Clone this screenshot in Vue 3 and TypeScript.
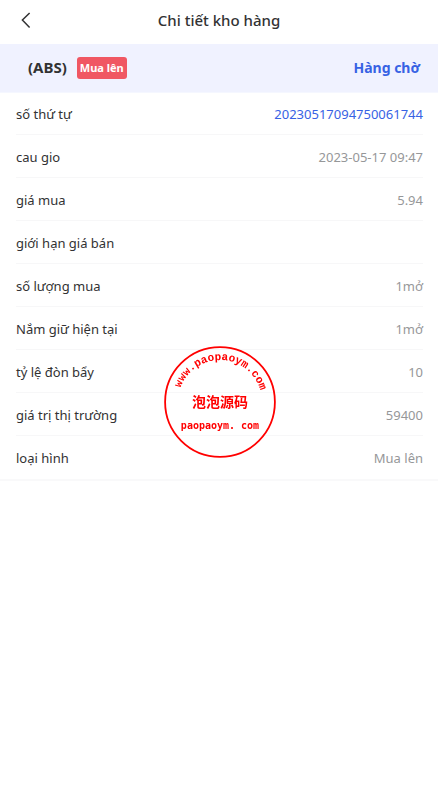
<script setup lang="ts">
interface DetailRow {
  label: string
  value: string
  link?: boolean
}

const rows: DetailRow[] = [
  { label: 'số thứ tự', value: '20230517094750061744', link: true },
  { label: 'cau gio', value: '2023-05-17 09:47' },
  { label: 'giá mua', value: '5.94' },
  { label: 'giới hạn giá bán', value: '' },
  { label: 'số lượng mua', value: '1mở' },
  { label: 'Nắm giữ hiện tại', value: '1mở' },
  { label: 'tỷ lệ đòn bẩy', value: '10' },
  { label: 'giá trị thị trường', value: '59400' },
  { label: 'loại hình', value: 'Mua lên' },
]
</script>

<template>
  <div class="page">
    <header class="nav">
      <button class="back" type="button" aria-label="Quay lại">
        <svg width="12" height="18" viewBox="0 0 12 18" fill="none" stroke="#323233" stroke-width="1.5">
          <path d="M9.6 2 2.4 9l7.2 7.4" />
        </svg>
      </button>
      <h1 class="title">Chi tiết kho hàng</h1>
    </header>

    <section class="summary">
      <span class="symbol">(ABS)</span>
      <span class="tag">Mua lên</span>
      <span class="status">Hàng chờ</span>
    </section>

    <dl class="details">
      <div v-for="row in rows" :key="row.label" class="row">
        <dt class="label">{{ row.label }}</dt>
        <dd class="value" :class="{ link: row.link }">{{ row.value }}</dd>
      </div>
    </dl>

    <svg class="seal" width="114" height="114" viewBox="0 0 114 114">
      <defs>
        <path id="seal-arc" d="M16 58a42 42 0 0 1 84 0" />
      </defs>
      <circle cx="58" cy="58" r="54.9" fill="none" stroke="#ff0000" stroke-width="1.8" />
      <text class="arc-text">
        <textPath href="#seal-arc" startOffset="51%" text-anchor="middle">www.paopaoym.com</textPath>
      </text>
      <text class="seal-name" x="58" y="63" text-anchor="middle">泡泡源码</text>
      <text class="seal-site" x="58" y="85" text-anchor="middle">paopaoym. com</text>
    </svg>
  </div>
</template>

<style>
body {
  background: #fff;
}
</style>

<style scoped>
.page {
  font-family: 'Noto Sans', 'Open Sans', sans-serif;
  font-size: 13px;
  color: #323233;
}

.nav {
  box-sizing: border-box;
  display: grid;
  grid-template-columns: 48px 1fr 48px;
  align-items: center;
  height: 44px;
  padding-bottom: 4px;
}

.back {
  display: flex;
  align-items: center;
  height: 40px;
  margin: 0;
  padding: 0 0 0 20px;
  border: 0;
  background: none;
}

.title {
  margin: 0;
  font-size: 15px;
  font-weight: 500;
  line-height: 24px;
  text-align: center;
}

.summary {
  display: flex;
  align-items: center;
  height: 48px;
  padding: 0 18px 0 28px;
  border-bottom: 1px solid #f5f7ff;
  background: #f0f2ff;
  font-weight: 700;
}

.symbol,
.status {
  padding-bottom: 2px;
}

.symbol {
  font-size: 15px;
}

.tag {
  margin-left: 10px;
  padding: 0 3px;
  border-radius: 3px;
  background: #f05763;
  color: #fff;
  font-size: 11px;
  line-height: 22px;
}

.status {
  margin-left: auto;
  color: #3762e4;
  font-size: 14px;
}

.details {
  margin: 0;
  padding: 0 15px 0 16px;
  border-bottom: 2px solid #f9f9fa;
}

.row {
  display: flex;
  align-items: center;
  justify-content: space-between;
  height: 42px;
  border-bottom: 1px solid #f7f7f8;
}

.row:first-child {
  height: 41px;
}

.row:last-child {
  height: 43px;
  border-bottom: 0;
}

.label,
.value {
  padding-top: 1px;
}

.value {
  margin: 0;
  color: #969799;
}

.value.link {
  color: #3762e4;
}

.seal {
  position: fixed;
  top: 50%;
  left: 50%;
  transform: translate(-50%, -50%);
  pointer-events: none;
}

.seal text {
  fill: #ff0000;
  font-family: 'Liberation Mono', monospace;
  font-weight: 700;
}

.seal .arc-text {
  font-size: 11px;
}

.seal .seal-name {
  font-family: 'Noto Sans CJK SC', sans-serif;
  font-size: 14px;
}

.seal .seal-site {
  font-family: 'DejaVu Sans Mono', monospace;
  font-size: 10px;
}
</style>
